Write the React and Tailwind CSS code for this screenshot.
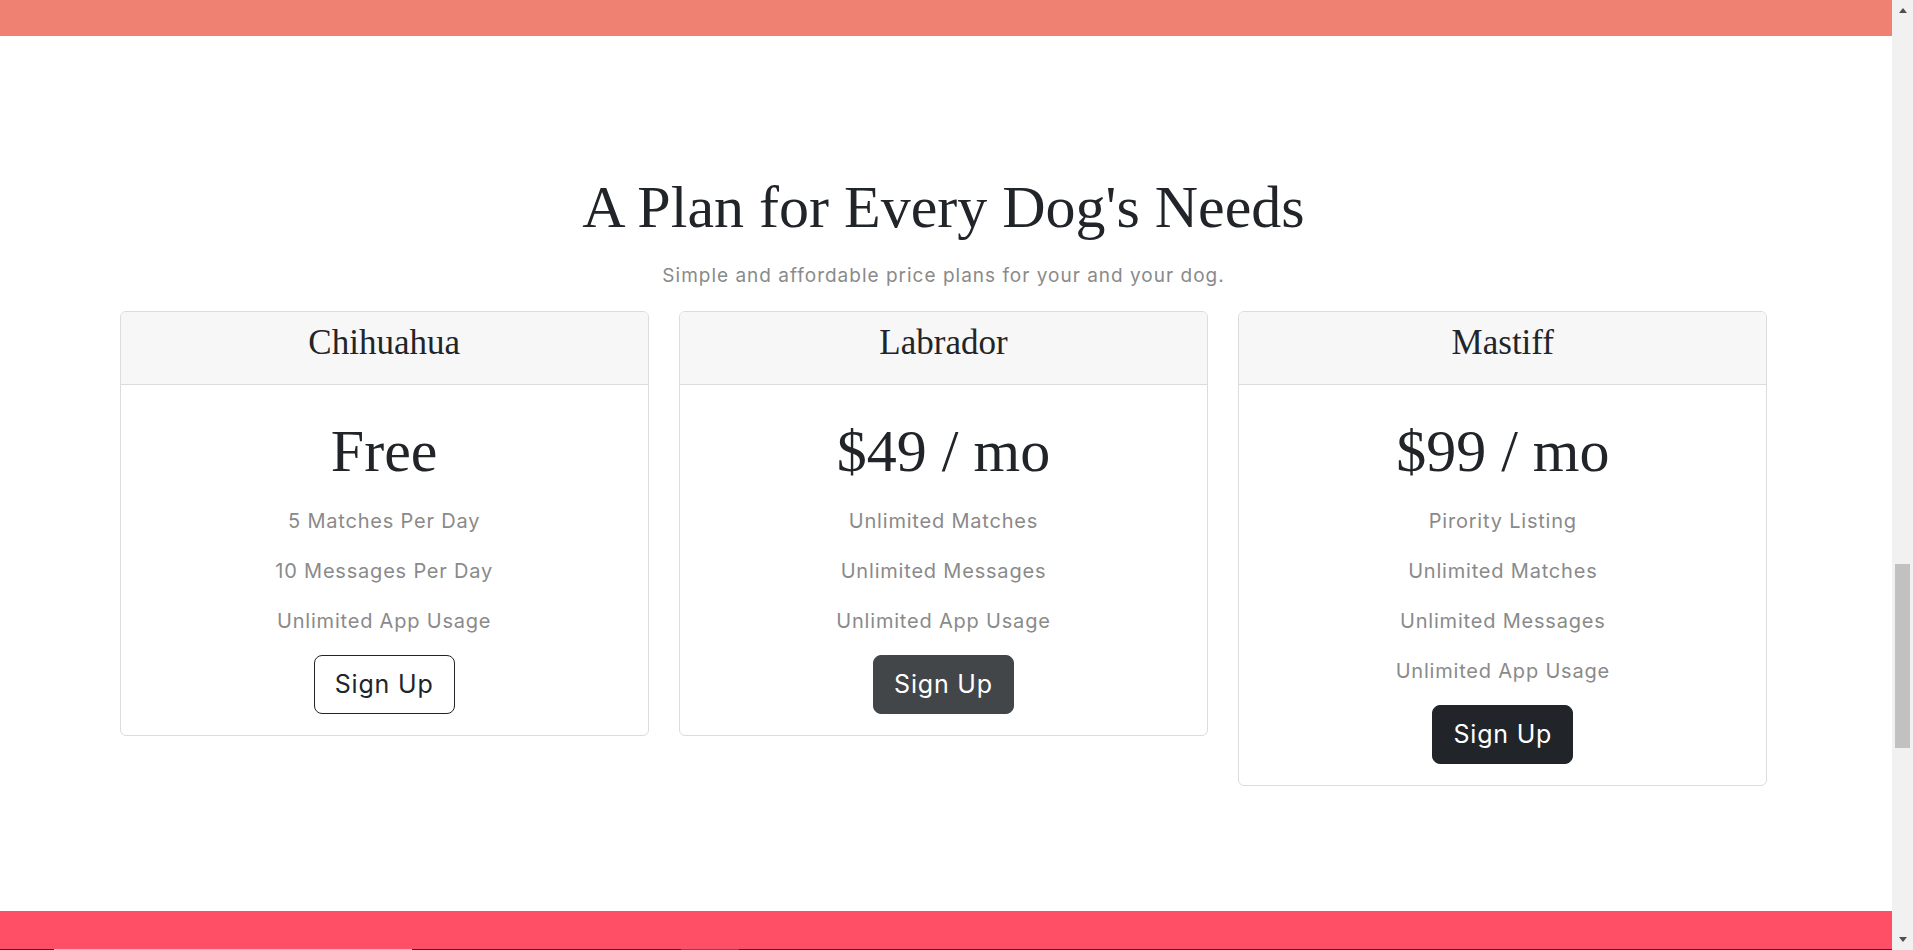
import React from "react";

const SANS = "font-['Inter','Liberation_Sans',sans-serif]";
const SERIF = "font-['Liberation_Serif','Times_New_Roman',serif]";

const plans = [
  {
    name: "Chihuahua",
    price: "Free",
    features: ["5 Matches Per Day", "10 Messages Per Day", "Unlimited App Usage"],
    btn: "border border-[#212529] text-[#212529] bg-white",
  },
  {
    name: "Labrador",
    price: "$49 / mo",
    features: ["Unlimited Matches", "Unlimited Messages", "Unlimited App Usage"],
    btn: "border border-[#424649] bg-[#424649] text-white",
  },
  {
    name: "Mastiff",
    price: "$99 / mo",
    features: ["Pirority Listing", "Unlimited Matches", "Unlimited Messages", "Unlimited App Usage"],
    btn: "border border-[#212529] bg-[#212529] text-white",
  },
];

function Card({ p }) {
  return (
    <div className="flex flex-col overflow-hidden rounded-[6px] border border-[#dcdcdc] bg-white">
      <div className={`h-[73px] border-b border-[#dcdcdc] bg-[#f7f7f7] pt-[10px] text-center text-[35px] leading-[42px] text-[#212529] ${SERIF}`}>
        {p.name}
      </div>
      <div className="flex flex-col items-center pb-[21px] pt-[30px]">
        <div className={`text-[60px] leading-[72px] text-[#212529] ${SERIF}`}>{p.price}</div>
        <div className="mt-[8px] flex flex-col items-center">
          {p.features.map((f) => (
            <div key={f} className={`flex h-[50px] items-center pt-px text-[20px] font-normal tracking-[0.8px] text-[#8a8a8a] ${SANS}`}>
              {f}
            </div>
          ))}
        </div>
        <button className={`mt-[10px] flex h-[59px] w-[141px] items-center justify-center rounded-[8px] text-[25px] tracking-[0.8px] ${SANS} ${p.btn}`}>
          Sign Up
        </button>
      </div>
    </div>
  );
}

function Scrollbar() {
  return (
    <div className="relative flex h-[950px] w-[21px] flex-col items-center bg-[#f1f1f1]">
      <div className="mt-[8px] h-0 w-0 border-x-[4px] border-b-[5px] border-x-transparent border-b-[#505050]" />
      <div className="absolute left-[3px] top-[564px] h-[184px] w-[15px] bg-[#c1c1c1]" />
      <div className="absolute bottom-[8px] h-0 w-0 border-x-[4px] border-t-[5px] border-x-transparent border-t-[#505050]" />
    </div>
  );
}

export default function App() {
  return (
    <div className="relative flex h-[950px] w-full overflow-hidden bg-white">
      <div className="flex flex-1 flex-col">
        <div className="h-[36px] bg-[#EF8172]" />
        <section className="flex h-[875px] flex-col items-center pr-[5px]">
          <h1 className={`mt-[135px] text-[60px] leading-[72px] text-[#212529] ${SERIF}`}>A Plan for Every Dog's Needs</h1>
          <p className={`mt-[21px] text-[19px] leading-[24px] tracking-[1px] text-[#8a8a8a] ${SANS}`}>
            Simple and affordable price plans for your and your dog.
          </p>
          <div className="mt-[23px] grid w-[1648px] grid-cols-3 items-start gap-[30px]">
            {plans.map((p) => (
              <Card key={p.name} p={p} />
            ))}
          </div>
        </section>
        <div className="h-[38px] bg-[#FF4F66]" />
        <div className="flex h-px bg-[#2b2b2b]">
          <div className="ml-[54px] w-[358px] bg-[#c8c8c8]" />
          <div className="ml-[269px] w-[58px] bg-[#5a5a5a]" />
        </div>
      </div>
      <Scrollbar />
    </div>
  );
}
